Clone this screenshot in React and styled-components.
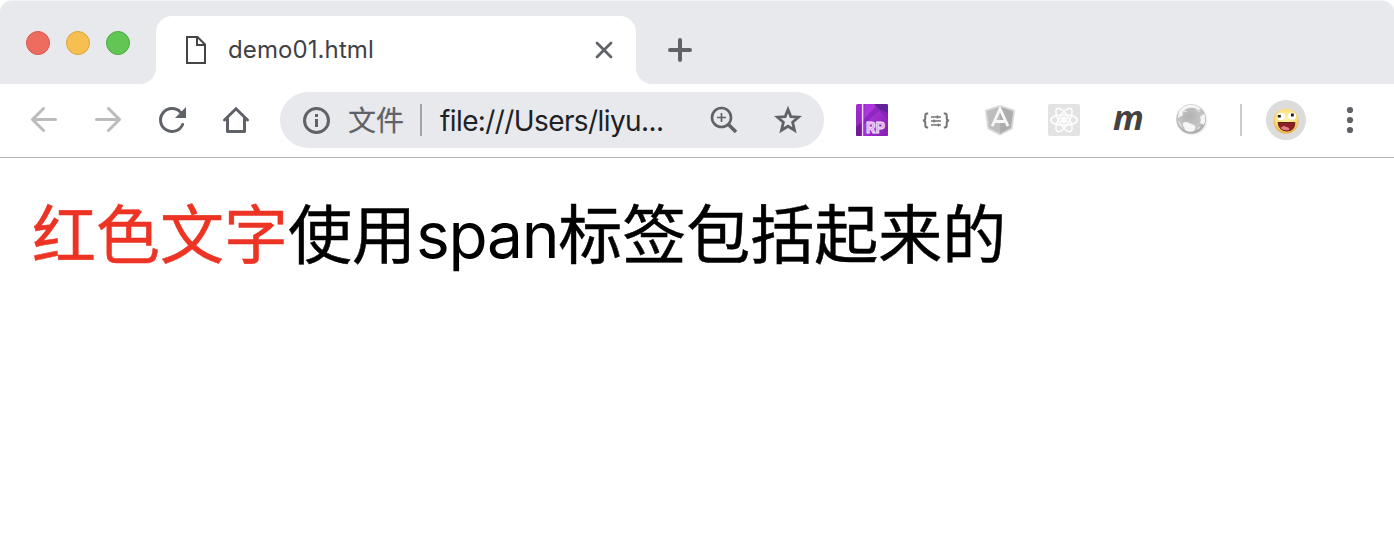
import React from "react";
import styled, { createGlobalStyle } from "styled-components";

const Global = createGlobalStyle`
  * { box-sizing: border-box; }
  html, body { margin: 0; background: #fff; }
  body { font-family: Inter, "Noto Sans CJK SC", sans-serif; }
  svg { display: block; flex: none; }
`;

const Window = styled.div`
  width: 1394px;
  height: 544px;
  overflow: hidden;
  background: #fff;
`;

const TabStrip = styled.header`
  display: flex;
  align-items: flex-start;
  height: 84px;
  padding-left: 26px;
  background: #e8e9ed;
  border-top: 1px solid #f3f4f6;
  border-radius: 12px 12px 0 0;
`;

const Lights = styled.div`
  display: flex;
  gap: 16px;
  width: 130px;
  padding-top: 30px;
`;

const Light = styled.span`
  width: 24px;
  height: 24px;
  border-radius: 50%;
  background: ${(p) => p.$fill};
  border: 1px solid ${(p) => p.$edge};
`;

const Tab = styled.div`
  position: relative;
  display: flex;
  align-items: center;
  width: 480px;
  height: 68px;
  margin-top: 15px;
  padding: 0 20px 0 26px;
  background: #fff;
  border-radius: 16px 16px 0 0;
  &::before, &::after {
    content: "";
    position: absolute;
    bottom: 0;
    width: 16px;
    height: 16px;
  }
  &::before {
    left: -16px;
    background: radial-gradient(circle at 0 0, transparent 15.6px, #fff 16.2px);
  }
  &::after {
    right: -16px;
    background: radial-gradient(circle at 100% 0, transparent 15.6px, #fff 16.2px);
  }
`;

const TabTitle = styled.span`
  flex: 1;
  margin-left: 18px;
  font-size: 24px;
  line-height: 32px;
  letter-spacing: 0.1px;
  color: #3f4145;
  white-space: nowrap;
`;

const NewTab = styled.div`
  margin: 29px 0 0 24px;
`;

const Toolbar = styled.nav`
  display: flex;
  align-items: center;
  height: 74px;
  padding: 0 0 1px 12px;
  border-bottom: 1px solid #b3b4b6;
`;

const ToolButton = styled.div`
  display: flex;
  justify-content: center;
  flex: none;
  width: 64px;
`;

const AddressBar = styled.div`
  display: flex;
  align-items: center;
  flex: none;
  width: 544px;
  height: 56px;
  margin: 0 16px 0 12px;
  padding: 0 16px;
  border-radius: 28px;
  background: #e8e9ed;
`;

const Scheme = styled.span`
  margin-left: 12px;
  width: 72px;
  padding-top: 2px;
  font-size: 28px;
  line-height: 40px;
  color: #5f6164;
  -webkit-text-stroke: 0.2px currentColor;
`;

const Rule = styled.span`
  flex: none;
  width: 2px;
  height: 32px;
  background: ${(p) => p.$color};
`;

const Url = styled.span`
  flex: 1;
  margin-left: 18px;
  padding-top: 1px;
  font-size: 28px;
  line-height: 40px;
  letter-spacing: -0.6px;
  color: #202124;
  white-space: nowrap;
`;

const AddressAction = styled.div`
  margin-left: 24px;
`;

const LetterMark = styled.span`
  font: italic 700 34px/40px "Open Sans", sans-serif;
  height: 40px;
  margin-top: -6px;
  padding-left: 1px;
  color: #424242;
`;

const ExtensionRule = styled(Rule)`
  margin: 0 24px 0 16px;
`;

const Avatar = styled.div`
  flex: none;
  width: 40px;
  height: 40px;
  border-radius: 50%;
  background: #dcdcdc;
`;

const MenuButton = styled.div`
  margin-left: 24px;
`;

const Page = styled.main`
  padding: 32px;
`;

const Sentence = styled.p`
  margin: 0;
  font-size: 64px;
  line-height: 90px;
  color: #000;
  white-space: nowrap;
  -webkit-text-stroke: 0.5px currentColor;
`;

const Red = styled.span`
  color: #ed3323;
`;

const Latin = styled.span`
  letter-spacing: -1.3px;
  -webkit-text-stroke: 0;
`;

const Icon = ({ children, size = 40, color = "#5f6368", width = 3, ...rest }) => (
  <svg width={size} height={size} viewBox={`0 0 ${size} ${size}`} fill="none" stroke={color} strokeWidth={width} {...rest}>
    {children}
  </svg>
);

const AxureIcon = () => (
  <Icon size={32} stroke="none">
    <defs>
      <linearGradient id="axure" x1="0" y1="0" x2="1" y2="1">
        <stop offset="0" stopColor="#a32bd0" />
        <stop offset="0.5" stopColor="#8b26bd" />
        <stop offset="1" stopColor="#7e1bab" />
      </linearGradient>
      <linearGradient id="sheen" x1="0" y1="0" x2="1" y2="0.6">
        <stop offset="0" stopColor="#b238e4" />
        <stop offset="1" stopColor="#8a24b6" />
      </linearGradient>
    </defs>
    <rect width="32" height="32" rx="1.5" fill="url(#axure)" />
    <path d="M8 15L22 0H9z" fill="#ac35dd" />
    <path d="M18 0H30.500Q32 0 32 1.500V9L24 6z" fill="#64219a" />
    <path d="M8 20L23 7L32 15V30.500Q32 32 30.500 32H8z" fill="url(#sheen)" />
    <path d="M0 23L8 17V32H1.500Q0 32 0 30.500z" fill="#71199a" />
    <path d="M6.6 0V32" stroke="#f1d9fa" strokeWidth="1.5" />
    <text x="10" y="28.500" textLength="19" lengthAdjust="spacingAndGlyphs" fontFamily="Inter, sans-serif" fontWeight="700" fontSize="15" fill="#d59be8" stroke="#f5e4fb" strokeWidth="0.9">RP</text>
  </Icon>
);

const BracesIcon = () => (
  <Icon color="#747474" width={2}>
    <path d="M12.200 13.500h-.9q-2 0-2 2v2.700q0 2-2.300 2.300q2.300.3 2.300 2.300v2.700q0 2 2 2h.9M27.800 13.500h.9q2 0 2 2v2.700q0 2 2.300 2.300q-2.300.3-2.300 2.300v2.700q0 2-2 2h-.9" />
    <path d="M15 17h10M15 21h10M15 25h10M21.5 15.5v3M18 19.5v3M22.5 23.5v3" strokeWidth="1.4" />
  </Icon>
);

const AngularIcon = () => (
  <Icon stroke="none">
    <path d="M20 5L35 10L32.5 29L20 35.500L7.500 29L5 10z" fill="#d6d6d6" />
    <path d="M20 7L33 11.300L30.800 27.800L20 33.500L9.200 27.800L7 11.300z" fill="#bdbdbd" />
    <path d="M20 7L33 11.300L30.800 27.800L20 33.500z" fill="#adadad" />
    <path d="M12.200 26.200L20 8.800L28 26.200M15.500 21.500H24.500" stroke="#f8f8f8" strokeWidth="2.800" fill="none" />
  </Icon>
);

const ReactIcon = () => (
  <Icon size={32} color="#fff" width={1.5}>
    <rect width="32" height="32" rx="2" fill="#e3e3e3" stroke="none" />
    {[0, 60, 120].map((a) => (
      <ellipse key={a} cx="16" cy="16" rx="13.3" ry="5.2" transform={`rotate(${a} 16 16)`} />
    ))}
    <circle cx="16" cy="16" r="3.400" fill="#fff" stroke="none" />
  </Icon>
);

const GlobeIcon = () => (
  <Icon stroke="none">
    <defs>
      <radialGradient id="globe" cx="0.45" cy="0.4" r="0.6">
        <stop offset="0" stopColor="#b2b2b2" />
        <stop offset="0.7" stopColor="#c5c5c5" />
        <stop offset="1" stopColor="#a9a9a9" />
      </radialGradient>
      <filter id="shade" x="-20%" y="-20%" width="140%" height="140%"><feGaussianBlur stdDeviation="1.2" /></filter>
      <clipPath id="disc"><circle cx="19" cy="19" r="14.200" /></clipPath>
    </defs>
    <circle cx="20.200" cy="20.200" r="14" fill="#d4d4d4" filter="url(#shade)" />
    <circle cx="19" cy="19" r="14.800" fill="url(#globe)" />
    <g clipPath="url(#disc)" fill="#f6f6f6">
      <path d="M7 10Q12 4 19 4.500L25 5.500L29 9Q26 11 23 8Q18 7 14 9L10 12L11 15L6 18z" />
      <path d="M10.500 23.500Q14 21 17 23L22 25Q25 27 22 31Q17 33 13 30Q12 27 10.500 23.500z" />
      <path d="M28 17L33 13Q35 20 32 25L28 23Q29.500 20 28 17z" />
    </g>
    <path d="M10 13Q12 10 15 12M24 9l4 3M6.500 21Q8 25 10 27M25 29l3-2" stroke="#dedede" strokeWidth="1.500" fill="none" />
  </Icon>
);

const FaceIcon = () => (
  <Icon stroke="none">
    <defs>
      <radialGradient id="face" cx="0.5" cy="0.42" r="0.58">
        <stop offset="0" stopColor="#fff2a3" />
        <stop offset="0.7" stopColor="#fbe084" />
        <stop offset="1" stopColor="#e5a940" />
      </radialGradient>
    </defs>
    <circle cx="20" cy="21" r="12.600" fill="url(#face)" />
    <ellipse cx="15" cy="16.400" rx="4" ry="3.600" fill="#fff" />
    <ellipse cx="26" cy="16.200" rx="4" ry="3.600" fill="#fff" />
    <path d="M11.800 15h3v2.600h-3zM25 13.500h2.800v3h-2.800z" fill="#1f1b14" />
    <path d="M12 22.500H29Q28.500 31 21 31Q13 31 12 22.500z" fill="#8c2025" stroke="#682015" strokeWidth="1" />
    <path d="M14.500 28Q18 24.800 20 27Q23 26.500 23.500 29.800Q18 31.500 14.500 28z" fill="#e67c80" />
  </Icon>
);

export default function App() {
  return (
    <Window>
      <Global />
      <TabStrip>
        <Lights>
          <Light $fill="#ee6b60" $edge="#d9574e" />
          <Light $fill="#f6bf50" $edge="#dba43f" />
          <Light $fill="#62c654" $edge="#4dab42" />
        </Lights>
        <Tab>
          <Icon size={28} color="#444546" width={2}>
            <path d="M5 1H15.500L23 8.500V27H5zM15 1V9H23" />
          </Icon>
          <TabTitle>demo01.html</TabTitle>
          <Icon size={24} width={2.8} strokeLinecap="round">
            <path d="M5 5L19 19M19 5L5 19" />
          </Icon>
        </Tab>
        <NewTab>
          <Icon width={4} strokeLinecap="round">
            <path d="M10 20H30M20 10V30" />
          </Icon>
        </NewTab>
      </TabStrip>
      <Toolbar>
        <ToolButton>
          <Icon color="#babcbe" strokeLinecap="round" strokeLinejoin="round">
            <path d="M31.500 19.500H9M19.500 8.500L8.500 19.500L19.500 30.500" />
          </Icon>
        </ToolButton>
        <ToolButton>
          <Icon color="#babcbe" strokeLinecap="round" strokeLinejoin="round">
            <path d="M8.500 19.500H31M20.500 8.500L31.500 19.500L20.500 30.500" />
          </Icon>
        </ToolButton>
        <ToolButton>
          <Icon strokeLinecap="round">
            <path d="M30.600 24.500A11.500 11.500 0 1 1 28.500 12.200" />
            <path d="M34 7V18H23z" fill="#5f6368" stroke="none" />
          </Icon>
        </ToolButton>
        <ToolButton>
          <Icon strokeLinecap="round" strokeLinejoin="round">
            <path d="M8.500 20L20 8.800L31.500 20" strokeLinejoin="miter" />
            <path d="M11.500 18.500V31.500H28.500V18.500" />
          </Icon>
        </ToolButton>
        <AddressBar>
          <Icon>
            <circle cx="20.500" cy="20.500" r="12" />
            <path d="M20.500 19V27M20.500 14V17" />
          </Icon>
          <Scheme>文件</Scheme>
          <Rule $color="#a1a4a8" />
          <Url>file:///Users/liyu...</Url>
          <AddressAction>
            <Icon>
              <circle cx="17.500" cy="17.500" r="9.500" strokeWidth="2.600" />
              <path d="M24 24L32 32" strokeWidth="3.600" />
              <path d="M13 17.500H22M17.500 13V22" strokeWidth="1.700" />
            </Icon>
          </AddressAction>
          <AddressAction>
            <Icon width={2.8} strokeLinejoin="miter">
              <path d="M20 9.500L22.800 16.600L30.500 17.200L24.600 22.200L26.500 30.300L20 26.200L13.500 30.300L15.400 22.200L9.500 17.200L17.200 16.600z" />
            </Icon>
          </AddressAction>
        </AddressBar>
        <ToolButton><AxureIcon /></ToolButton>
        <ToolButton><BracesIcon /></ToolButton>
        <ToolButton><AngularIcon /></ToolButton>
        <ToolButton><ReactIcon /></ToolButton>
        <ToolButton><LetterMark>m</LetterMark></ToolButton>
        <ToolButton><GlobeIcon /></ToolButton>
        <ExtensionRule $color="#cbccce" />
        <Avatar><FaceIcon /></Avatar>
        <MenuButton>
          <Icon stroke="none">
            {[10, 20, 30].map((y) => <circle key={y} cx="20" cy={y} r="3.100" fill="#5f6368" />)}
          </Icon>
        </MenuButton>
      </Toolbar>
      <Page>
        <Sentence>
          <Red>红色文字</Red>使用<Latin>span</Latin>标签包括起来的
        </Sentence>
      </Page>
    </Window>
  );
}
